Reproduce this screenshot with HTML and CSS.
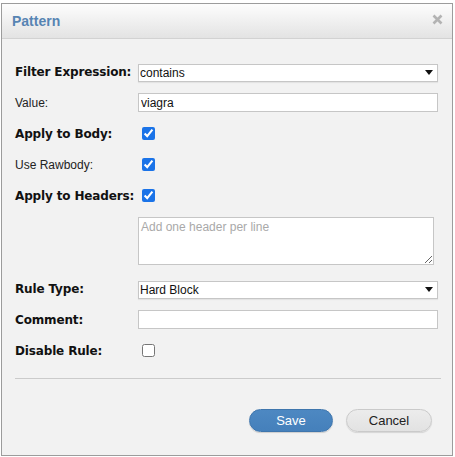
FILE: index.html
```html
<!DOCTYPE html>
<html>
<head>
<meta charset="utf-8">
<link rel="stylesheet" href="styles.css">
</head>
<body>
<div class="dialog">
  <div class="header">
    <span class="title">Pattern</span>
    <svg class="close" width="11" height="11" viewBox="0 0 11 11"><path d="M1.5 1.5 L9.5 9.5 M9.5 1.5 L1.5 9.5" stroke="#b3b3b3" stroke-width="2.6" stroke-linecap="butt"/></svg>
  </div>
  <div class="content">
    <div class="row">
      <label class="label bold">Filter Expression:</label>
      <div class="select-wrap"><select class="select"><option>contains</option></select></div>
    </div>
    <div class="row">
      <label class="label">Value:</label>
      <input class="text" type="text" value="viagra">
    </div>
    <div class="row">
      <label class="label bold">Apply to Body:</label>
      <input class="check" type="checkbox" checked>
    </div>
    <div class="row">
      <label class="label">Use Rawbody:</label>
      <input class="check" type="checkbox" checked>
    </div>
    <div class="row">
      <label class="label bold">Apply to Headers:</label>
      <input class="check" type="checkbox" checked>
    </div>
    <div class="row-area">
      <textarea class="area" placeholder="Add one header per line"></textarea>
    </div>
    <div class="row">
      <label class="label bold">Rule Type:</label>
      <div class="select-wrap"><select class="select"><option>Hard Block</option></select></div>
    </div>
    <div class="row">
      <label class="label bold">Comment:</label>
      <input class="text" type="text">
    </div>
    <div class="row">
      <label class="label bold">Disable Rule:</label>
      <input class="check" type="checkbox">
    </div>
    <div class="divider"></div>
    <div class="buttons">
      <button class="btn btn-save">Save</button>
      <button class="btn btn-cancel">Cancel</button>
    </div>
  </div>
</div>
</body>
</html>
```
FILE: styles.css
```css
html, body {
  margin: 0;
  padding: 0;
  background: #ffffff;
  font-family: "Liberation Sans", Arial, sans-serif;
}
body {
  padding-top: 3px;
  padding-left: 1px;
}
.dialog {
  box-sizing: border-box;
  width: 452px;
  height: 453px;
  border: 1px solid #9c9c9c;
  background: #f2f2f2;
  display: flex;
  flex-direction: column;
}
.header {
  box-sizing: border-box;
  height: 35px;
  border-bottom: 1px solid #d2d2d2;
  background: linear-gradient(#fdfdfd, #e3e3e3);
  display: flex;
  align-items: center;
  justify-content: space-between;
  padding: 0 9px 0 10px;
}
.title {
  font-size: 14px;
  font-weight: bold;
  color: #5784b3;
  margin-top: -1px;
}
.close {
  display: block;
  margin-top: -4px;
}
.content {
  padding: 17px 13px 0 13px;
}
.row {
  display: flex;
  align-items: center;
  min-height: 31px;
}
.label {
  width: 123px;
  flex: none;
  font-size: 12px;
  color: #222;
}
.label.bold {
  font-family: "DejaVu Sans", Verdana, sans-serif;
  font-weight: bold;
  letter-spacing: -0.15px;
  color: #111;
}
.select-wrap {
  position: relative;
  width: 300px;
  height: 18px;
}
.select-wrap::after {
  content: "";
  position: absolute;
  right: 5px;
  top: 7px;
  border-left: 4px solid transparent;
  border-right: 4px solid transparent;
  border-top: 5px solid #111;
  pointer-events: none;
}
.select {
  appearance: none;
  -webkit-appearance: none;
  box-sizing: border-box;
  width: 300px;
  height: 18px;
  margin: 0;
  border: 1px solid #c6c6c6;
  border-radius: 0;
  background: #fff;
  font-family: "Liberation Sans", Arial, sans-serif;
  font-size: 12px;
  color: #111;
  padding: 0 0 0 1px;
  box-shadow: 0 1px 1px rgba(0,0,0,0.06);
}
.text {
  box-sizing: border-box;
  width: 300px;
  height: 19px;
  margin: 0;
  border: 1px solid #c6c6c6;
  background: #fff;
  font-family: "Liberation Sans", Arial, sans-serif;
  font-size: 12px;
  color: #111;
  padding: 0 2px;
  outline: none;
}
.check {
  width: 13px;
  height: 13px;
  margin: 3px 3px 3px 4px;
  accent-color: #1a73e8;
}
.row-area {
  padding: 6px 0 8px 123px;
}
.area {
  display: block;
  box-sizing: border-box;
  width: 296px;
  height: 48px;
  margin: 0;
  border: 1px solid #c6c6c6;
  background: #fff;
  font-family: "Liberation Sans", Arial, sans-serif;
  font-size: 12px;
  padding: 2px 2px;
  resize: both;
}
.area::placeholder {
  color: #a9a9a9;
}
.divider {
  margin: 12px -2px 0 0;
  border-top: 1px solid #cbcbcb;
}
.buttons {
  display: flex;
  justify-content: flex-end;
  gap: 13px;
  margin-top: 30px;
  padding-right: 7px;
}
.btn {
  box-sizing: border-box;
  height: 23px;
  border-radius: 12px;
  font-family: "Liberation Sans", Arial, sans-serif;
  font-size: 13px;
  padding: 0;
  cursor: pointer;
}
.btn-save {
  width: 84px;
  background: linear-gradient(#4d88c2, #4580bb);
  border: 1px solid #3f76ad;
  color: #fff;
  box-shadow: 0 1px 1px rgba(0,0,0,0.15);
}
.btn-cancel {
  width: 86px;
  background: linear-gradient(#ececec, #e2e2e2);
  border: 1px solid #cacaca;
  color: #222;
  box-shadow: 0 1px 1px rgba(0,0,0,0.12);
}
```
